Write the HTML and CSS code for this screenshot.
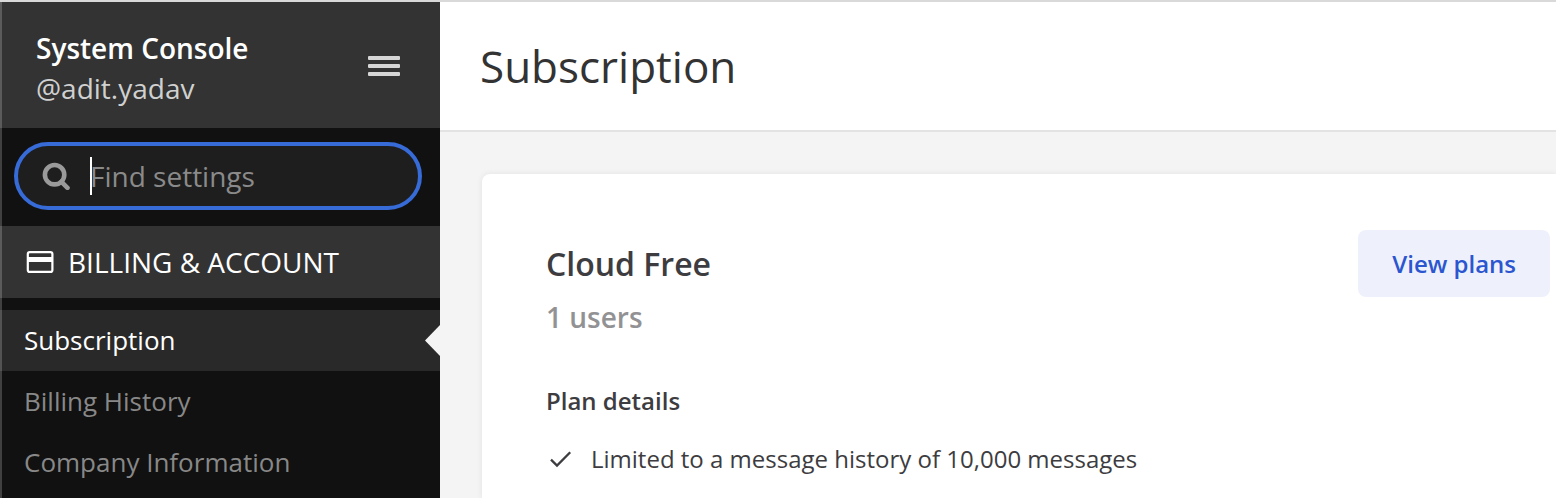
FILE: index.html
```html
<!DOCTYPE html>
<html lang="en">
<head>
<meta charset="utf-8">
<title>System Console - Subscription</title>
<link rel="stylesheet" href="styles.css">
</head>
<body>
<div class="console">
  <aside class="sidebar">
    <header class="sidebar-header">
      <div class="identity">
        <div class="identity-title">System Console</div>
        <div class="identity-user">@adit.yadav</div>
      </div>
      <button class="menu-button" type="button" aria-label="Menu">
        <svg width="32" height="20" viewBox="0 0 32 20" fill="currentColor" aria-hidden="true"><rect width="32" height="4" rx="1"/><rect y="8" width="32" height="4" rx="1"/><rect y="16" width="32" height="4" rx="1"/></svg>
      </button>
    </header>
    <div class="search">
      <label class="search-box">
        <svg class="search-icon" width="28" height="28" viewBox="0 0 28 28" fill="none" stroke="currentColor" aria-hidden="true"><circle cx="12.600" cy="12.700" r="9.7" stroke-width="4.6"/><path d="M19.500 19.800l6 6" stroke-width="4.6" stroke-linecap="round"/></svg>
        <input class="search-input" type="text" placeholder="Find settings" aria-label="Find settings">
      </label>
    </div>
    <nav>
      <h2 class="section-title">
        <svg width="28" height="22" viewBox="0 0 28 22" aria-hidden="true"><rect x="1.8" y="1.1" width="24.600" height="19.8" rx="2" fill="none" stroke="currentColor" stroke-width="2.2"/><path d="M2 6h24v5H2z" fill="currentColor"/></svg>
        <span>BILLING &amp; ACCOUNT</span>
      </h2>
      <ul class="nav-list">
        <li><a class="nav-link nav-link-active" href="#subscription">Subscription</a></li>
        <li><a class="nav-link" href="#history">Billing History</a></li>
        <li><a class="nav-link" href="#company">Company Information</a></li>
      </ul>
    </nav>
  </aside>
  <main class="content">
    <header class="content-header"><h1 class="page-title">Subscription</h1></header>
    <section class="card">
      <div class="card-top">
        <div>
          <h2 class="plan-name">Cloud Free</h2>
          <div class="plan-users">1 users</div>
        </div>
        <button class="plans-button" type="button">View plans</button>
      </div>
      <h3 class="details-title">Plan details</h3>
      <ul class="details-list">
        <li class="details-item">
          <svg width="29" height="28" viewBox="0 0 29 28" fill="none" stroke="currentColor" stroke-width="2.3" aria-hidden="true"><path d="M5 14.6l6 6L24.200 7.200"/></svg>
          <span>Limited to a message history of 10,000 messages</span>
        </li>
      </ul>
    </section>
  </main>
</div>
</body>
</html>
```
FILE: styles.css
```css
* {
  box-sizing: border-box;
}

body {
  margin: 0;
  font-family: "Open Sans", "Noto Sans", sans-serif;
  font-size: 26px;
  color: #3d3c40;
}

h1,
h2,
h3,
ul {
  margin: 0;
  padding: 0;
  list-style: none;
}

button,
input {
  font: inherit;
}

.console {
  display: flex;
  min-height: 100vh;
  border-top: 2px solid #d9d9d9;
}

.sidebar {
  position: relative;
  flex: 0 0 440px;
  min-width: 0;
  background: #111;
}

.sidebar::before {
  content: "";
  position: absolute;
  z-index: 1;
  top: 0;
  bottom: 0;
  left: 0;
  width: 2px;
  background: rgba(255, 255, 255, 0.2);
}

.sidebar-header {
  display: flex;
  align-items: center;
  justify-content: space-between;
  padding: 26px 40px 20px 36px;
  background: #333;
  font-size: 28px;
}

.identity-title {
  line-height: 40px;
  font-weight: 600;
  color: #fff;
}

.identity-user {
  line-height: 40px;
  color: #d0d0d0;
}

.menu-button {
  display: flex;
  margin-bottom: 4px;
  padding: 0;
  border: 0;
  background: none;
  color: #d6d6d6;
}

.search {
  padding: 14px 18px 16px 14px;
}

.search-box {
  display: flex;
  align-items: center;
  gap: 20px;
  height: 68px;
  padding: 0 24px;
  border: 4px solid #366bd8;
  border-radius: 34px;
  background: #1e1e1e;
}

.search-icon {
  flex: none;
  color: #9a9a9a;
}

.search-input {
  flex: 1;
  min-width: 0;
  height: 38px;
  padding: 0;
  border: 0;
  outline: 0;
  background: linear-gradient(#fff, #fff) left / 2px 100% no-repeat;
  font-size: 28px;
  color: #fff;
  caret-color: transparent;
}

.search-input::placeholder {
  color: #8a8a8a;
}

.section-title {
  display: flex;
  align-items: center;
  gap: 14px;
  height: 72px;
  padding: 0 26px;
  background: #333;
  font-size: 28px;
  font-weight: 400;
  color: #fff;
}

.nav-list {
  padding-top: 12px;
}

.nav-link {
  display: block;
  position: relative;
  padding: 0 24px;
  line-height: 61px;
  color: #888;
  text-decoration: none;
}

.nav-link-active {
  background: #292929;
  color: #fff;
}

.nav-link-active::after {
  content: "";
  position: absolute;
  top: 15px;
  right: 0;
  width: 15px;
  height: 31px;
  background: #f4f4f4;
  clip-path: polygon(100% 0, 100% 100%, 0 50%);
}

.content {
  display: flex;
  flex: 1;
  flex-direction: column;
  min-width: 0;
  background: #f4f4f4;
}

.content-header {
  padding: 34px 40px;
  border-bottom: 2px solid #e3e3e3;
  background: #fff;
}

.page-title {
  font-size: 44px;
  font-weight: 400;
  line-height: 60px;
  color: #333;
}

.card {
  flex: 1;
  margin: 42px 0 0 42px;
  padding: 56px 6px 0 64px;
  border-radius: 8px 0 0 0;
  background: #fff;
  box-shadow: 0 0 6px rgba(0, 0, 0, 0.08);
}

.card-top {
  display: flex;
  align-items: flex-start;
  justify-content: space-between;
}

.plan-name {
  padding-top: 12px;
  font-size: 32px;
  font-weight: 600;
  line-height: 44px;
}

.plan-users {
  padding-top: 11px;
  font-size: 28px;
  font-weight: 600;
  line-height: 40px;
  color: #929294;
}

.plans-button {
  height: 67px;
  padding: 0 34px;
  border: 0;
  border-radius: 8px;
  background: #eef1fb;
  font-size: 24px;
  font-weight: 600;
  color: #2c55d0;
}

.details-title {
  padding-top: 46px;
  font-size: 24px;
  font-weight: 600;
  line-height: 36px;
}

.details-list {
  padding-top: 20px;
}

.details-item {
  display: flex;
  align-items: center;
  gap: 16px;
  font-size: 24px;
  line-height: 40px;
}
```
